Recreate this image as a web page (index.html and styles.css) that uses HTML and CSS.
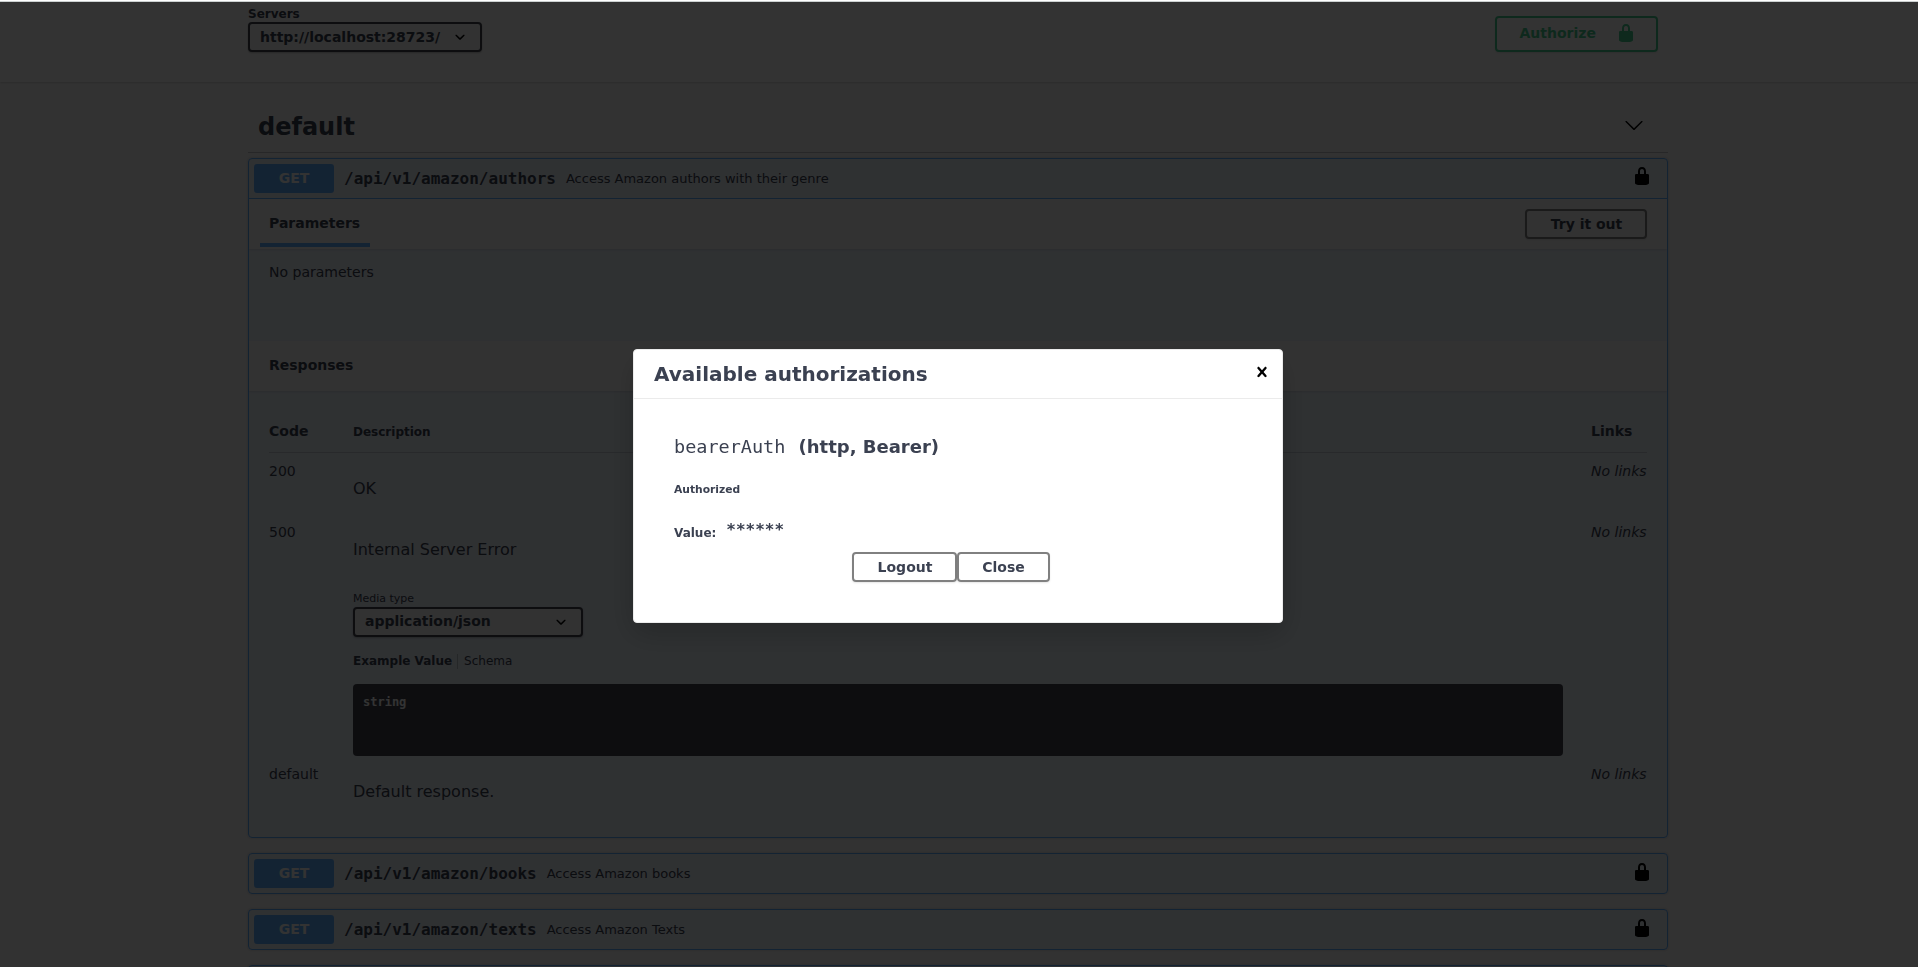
FILE: index.html
```html
<!DOCTYPE html>
<html lang="en">
<head>
<meta charset="utf-8">
<title>Swagger UI</title>
<link rel="stylesheet" href="styles.css">
</head>
<body>
<svg class="defs" width="0" height="0">
  <symbol id="locked" viewBox="0 0 20 20"><path d="M15.8 8H14V5.6C14 2.703 12.665 1 10 1 7.334 1 6 2.703 6 5.6V8H4c-.553 0-1 .646-1 1.199V17c0 .549.428 1.139.951 1.307l1.197.387C5.672 18.861 6.55 19 7.1 19h5.8c.549 0 1.428-.139 1.951-.307l1.196-.387c.524-.167.953-.757.953-1.306V9.199C17 8.646 16.352 8 15.8 8zM12 8H8V5.199C8 3.754 8.797 3 10 3c1.203 0 2 .754 2 2.199V8z"/></symbol>
  <symbol id="arrow" viewBox="0 0 20 20"><path d="M17.418 6.109c.272-.268.709-.268.979 0s.271.701 0 .969l-7.908 7.83c-.27.268-.707.268-.979 0l-7.908-7.83c-.27-.268-.27-.701 0-.969.271-.268.709-.268.979 0L10 13.25l7.418-7.141z"/></symbol>
  <symbol id="caret" viewBox="0 0 20 20"><path d="M13.418 7.859c.271-.268.709-.268.978 0 .27.268.272.701 0 .969l-3.908 3.83c-.27.268-.707.268-.979 0l-3.908-3.83c-.27-.267-.27-.701 0-.969.271-.268.709-.268.978 0L10 11l3.418-3.141z"/></symbol>
  <symbol id="close" viewBox="0 0 20 20"><path d="M14.348 14.849c-.469.469-1.229.469-1.697 0L10 11.819l-2.651 3.029c-.469.469-1.229.469-1.697 0-.469-.469-.469-1.229 0-1.697l2.758-3.15-2.759-3.152c-.469-.469-.469-1.228 0-1.697.469-.469 1.228-.469 1.697 0L10 8.183l2.651-3.031c.469-.469 1.228-.469 1.697 0 .469.469.469 1.229 0 1.697l-2.758 3.152 2.758 3.15c.469.469.469 1.229 0 1.698z"/></symbol>
</svg>

<main class="page">
  <section class="scheme">
    <div class="wrapper scheme-row">
      <div class="servers">
        <span class="servers-title">Servers</span>
        <div class="select servers-select"><span>http://localhost:28723/</span><svg class="icon"><use href="#caret"/></svg></div>
      </div>
      <button class="btn authorize"><span>Authorize</span><svg class="icon"><use href="#locked"/></svg></button>
    </div>
  </section>

  <section class="wrapper">
    <h3 class="tag"><span>default</span><svg class="icon"><use href="#arrow"/></svg></h3>

    <article class="opblock">
      <div class="summary open">
        <span class="method">GET</span><span class="path">/api/v1/amazon/authors</span><span class="desc">Access Amazon authors with their genre</span>
        <svg class="icon"><use href="#locked"/></svg>
      </div>
      <div class="section-header">
        <h4 class="tab">Parameters</h4>
        <button class="btn try">Try it out</button>
      </div>
      <p class="no-params">No parameters</p>
      <div class="section-header"><h4>Responses</h4></div>
      <div class="responses">
        <div class="row head"><b>Code</b><b class="small">Description</b><b>Links</b></div>
        <div class="row ok"><span>200</span><p>OK</p><i>No links</i></div>
        <div class="row error">
          <span>500</span>
          <div>
            <p>Internal Server Error</p>
            <span class="media-label">Media type</span>
            <div class="select media-select"><span>application/json</span><svg class="icon"><use href="#caret"/></svg></div>
            <div class="tabs"><b>Example Value</b><span>Schema</span></div>
            <pre class="example">string</pre>
          </div>
          <i>No links</i>
        </div>
        <div class="row"><span>default</span><p>Default response.</p><i>No links</i></div>
      </div>
    </article>

    <article class="opblock">
      <div class="summary">
        <span class="method">GET</span><span class="path">/api/v1/amazon/books</span><span class="desc">Access Amazon books</span>
        <svg class="icon"><use href="#locked"/></svg>
      </div>
    </article>
    <article class="opblock">
      <div class="summary">
        <span class="method">GET</span><span class="path">/api/v1/amazon/texts</span><span class="desc">Access Amazon Texts</span>
        <svg class="icon"><use href="#locked"/></svg>
      </div>
    </article>
    <article class="opblock clipped"></article>
  </section>
</main>

<div class="backdrop">
  <div class="modal">
    <header class="modal-header"><h3>Available authorizations</h3><svg class="icon"><use href="#close"/></svg></header>
    <div class="modal-body">
      <h4 class="scheme-name"><code>bearerAuth</code><span>(http, Bearer)</span></h4>
      <h6 class="authorized">Authorized</h6>
      <div class="value"><label>Value:</label><code>******</code></div>
      <div class="modal-actions"><button class="btn logout">Logout</button><button class="btn dismiss">Close</button></div>
    </div>
  </div>
</div>
</body>
</html>
```
FILE: styles.css
```css
*, *::before, *::after { box-sizing: border-box; }
html { overflow: hidden; }
body {
  margin: 0;
  height: 967px;
  overflow: hidden;
  background: #fafafa;
  color: #3b4151;
  font-family: "DejaVu Sans", sans-serif;
  font-size: 14px;
}
h3, h4, h6, p, pre { margin: 0; }
.defs { position: absolute; }
.icon { width: 20px; height: 20px; flex: none; fill: #000; }
.page { height: 967px; padding-top: 2px; overflow: hidden; }
.wrapper { width: 1420px; margin-left: 248px; }

.btn {
  border: 2px solid #808080;
  border-radius: 4px;
  background: transparent;
  box-shadow: 0 1px 2px rgba(0, 0, 0, .1);
  color: #3b4151;
  font: bold 14px/16px "DejaVu Sans", sans-serif;
  height: 30px;
  padding: 0;
}

.scheme { height: 80px; background: #fff; box-shadow: 0 1px 2px rgba(0, 0, 0, .15); }
.scheme-row { display: flex; justify-content: space-between; padding-right: 10px; }
.servers { padding-top: 5px; }
.servers-title { display: block; height: 15px; font-size: 12px; line-height: 14px; font-weight: bold; }
.select {
  display: flex;
  align-items: center;
  justify-content: space-between;
  height: 30px;
  padding: 0 10px 0 10px;
  border: 2px solid #41444e;
  border-radius: 4px;
  background: #f7f7f7;
  box-shadow: 0 1px 2px rgba(0, 0, 0, .25);
  font-weight: bold;
  line-height: 16px;
}
.servers-select { width: 234px; }
.authorize {
  display: flex;
  justify-content: space-between;
  width: 163px;
  height: 36px;
  margin-top: 14px;
  padding: 5px 20px 0 22.5px;
  border-color: #49cc90;
  color: #49cc90;
  line-height: 20px;
}
.authorize .icon { fill: #49cc90; }

.tag {
  display: flex;
  justify-content: space-between;
  align-items: center;
  height: 53px;
  margin: 18px 0 5px;
  padding: 1px 24px 0 10px;
  border-bottom: 1px solid rgba(59, 65, 81, .3);
  font-size: 24px;
}
.tag .icon { margin-bottom: 4px; }

.opblock {
  margin-bottom: 15px;
  border: 1px solid #61affe;
  border-radius: 4px;
  background: rgba(97, 175, 254, .1);
  box-shadow: 0 0 3px rgba(0, 0, 0, .19);
}
.clipped { height: 41px; margin: 0; }
.summary { display: flex; align-items: center; height: 39px; padding: 0 15px 0 5px; }
.summary.open { height: 40px; border-bottom: 1px solid #61affe; }
.method {
  width: 80px;
  height: 29px;
  border-radius: 3px;
  background: #61affe;
  color: #fff;
  text-align: center;
  font-weight: bold;
  line-height: 29px;
}
.path { padding: 0 10px; font: bold 16px "DejaVu Sans Mono", monospace; }
.desc { flex: 1; font-size: 13px; }
.summary .icon { margin: -3px 0 0; }
.summary.open .icon { margin-top: -5px; }

.section-header {
  display: flex;
  align-items: center;
  justify-content: space-between;
  height: 50px;
  padding: 0 20px;
  background: #fbfbfb;
  box-shadow: 0 1px 2px rgba(0, 0, 0, .1);
}
.section-header h4 { padding-bottom: 2px; font-size: 14px; }
.tab { position: relative; }
.tab::after {
  content: "";
  position: absolute;
  left: -10%;
  bottom: -14px;
  width: 121%;
  height: 4px;
  background: #61affe;
}
.try { width: 122px; padding: 0 0 1px 1px; }
.no-params { height: 92px; padding: 15px 20px; line-height: 16px; }

.responses { height: 446px; padding: 20px; }
.row { display: grid; grid-template-columns: 84px 1210px 1fr; line-height: 16px; padding-top: 10px; }
.row > :last-child { padding-left: 28px; }
.row p { padding-top: 16px; font-size: 16px; line-height: 20px; }
.head { height: 42px; padding-top: 12px; border-bottom: 1px solid rgba(59, 65, 81, .2); }
.small { font-size: 12px; line-height: 18px; }
.ok { height: 61px; }
.error { height: 242px; }
.media-label { display: block; margin-top: 32px; font-size: 11px; line-height: 14px; }
.media-select { width: 230px; margin-top: 1px; }
.media-select span { padding-bottom: 2px; }
.tabs { display: flex; margin-top: 17px; font-size: 12px; line-height: 15px; }
.tabs b { padding-right: 5px; border-right: 1px solid rgba(0, 0, 0, .2); }
.tabs span { padding-left: 6px; }
.example {
  height: 72px;
  margin-top: 15px;
  padding: 10px;
  border-radius: 4px;
  background: #41444e;
  color: #fff;
  font: bold 12px/16px "DejaVu Sans Mono", monospace;
}

.backdrop {
  position: fixed;
  inset: 2px 0 0;
  display: flex;
  justify-content: center;
  align-items: center;
  padding: 3px 2px 0 0;
  background: rgba(0, 0, 0, .8);
}
.backdrop::before {
  content: "";
  position: absolute;
  inset: -2px 0 auto;
  height: 2px;
  background: #fff;
  border-bottom: 1px solid #ccd1d1;
}
.modal {
  width: 650px;
  height: 274px;
  border: 1px solid #ebebeb;
  border-radius: 4px;
  background: #fff;
  box-shadow: 0 10px 30px rgba(0, 0, 0, .2);
}
.modal-header {
  display: flex;
  align-items: center;
  justify-content: space-between;
  height: 49px;
  padding: 0 10px 0 20px;
  border-bottom: 1px solid #ebebeb;
}
.modal-header h3 { font-size: 20px; }
.modal-header .icon { margin-top: -4px; }
.modal-body { padding: 36px 40px 0; }
.scheme-name { display: flex; align-items: baseline; height: 44px; font-size: 18px; line-height: 24px; }
.scheme-name code { width: 124.5px; font: 18.5px/24px "DejaVu Sans Mono", monospace; }
.authorized { height: 39px; padding-top: 4px; font-size: 10.72px; line-height: 14px; }
.value { display: flex; align-items: flex-start; gap: 10px; height: 34px; }
.value label { padding-top: 8px; font-size: 12px; line-height: 14px; font-weight: bold; }
.value code { padding-top: 1px; font: bold 16px/22px "DejaVu Sans Mono", monospace; }
.modal-actions { display: flex; padding-left: 178px; }
.logout { width: 105px; padding-left: 1px; }
.dismiss { width: 93px; }
```
